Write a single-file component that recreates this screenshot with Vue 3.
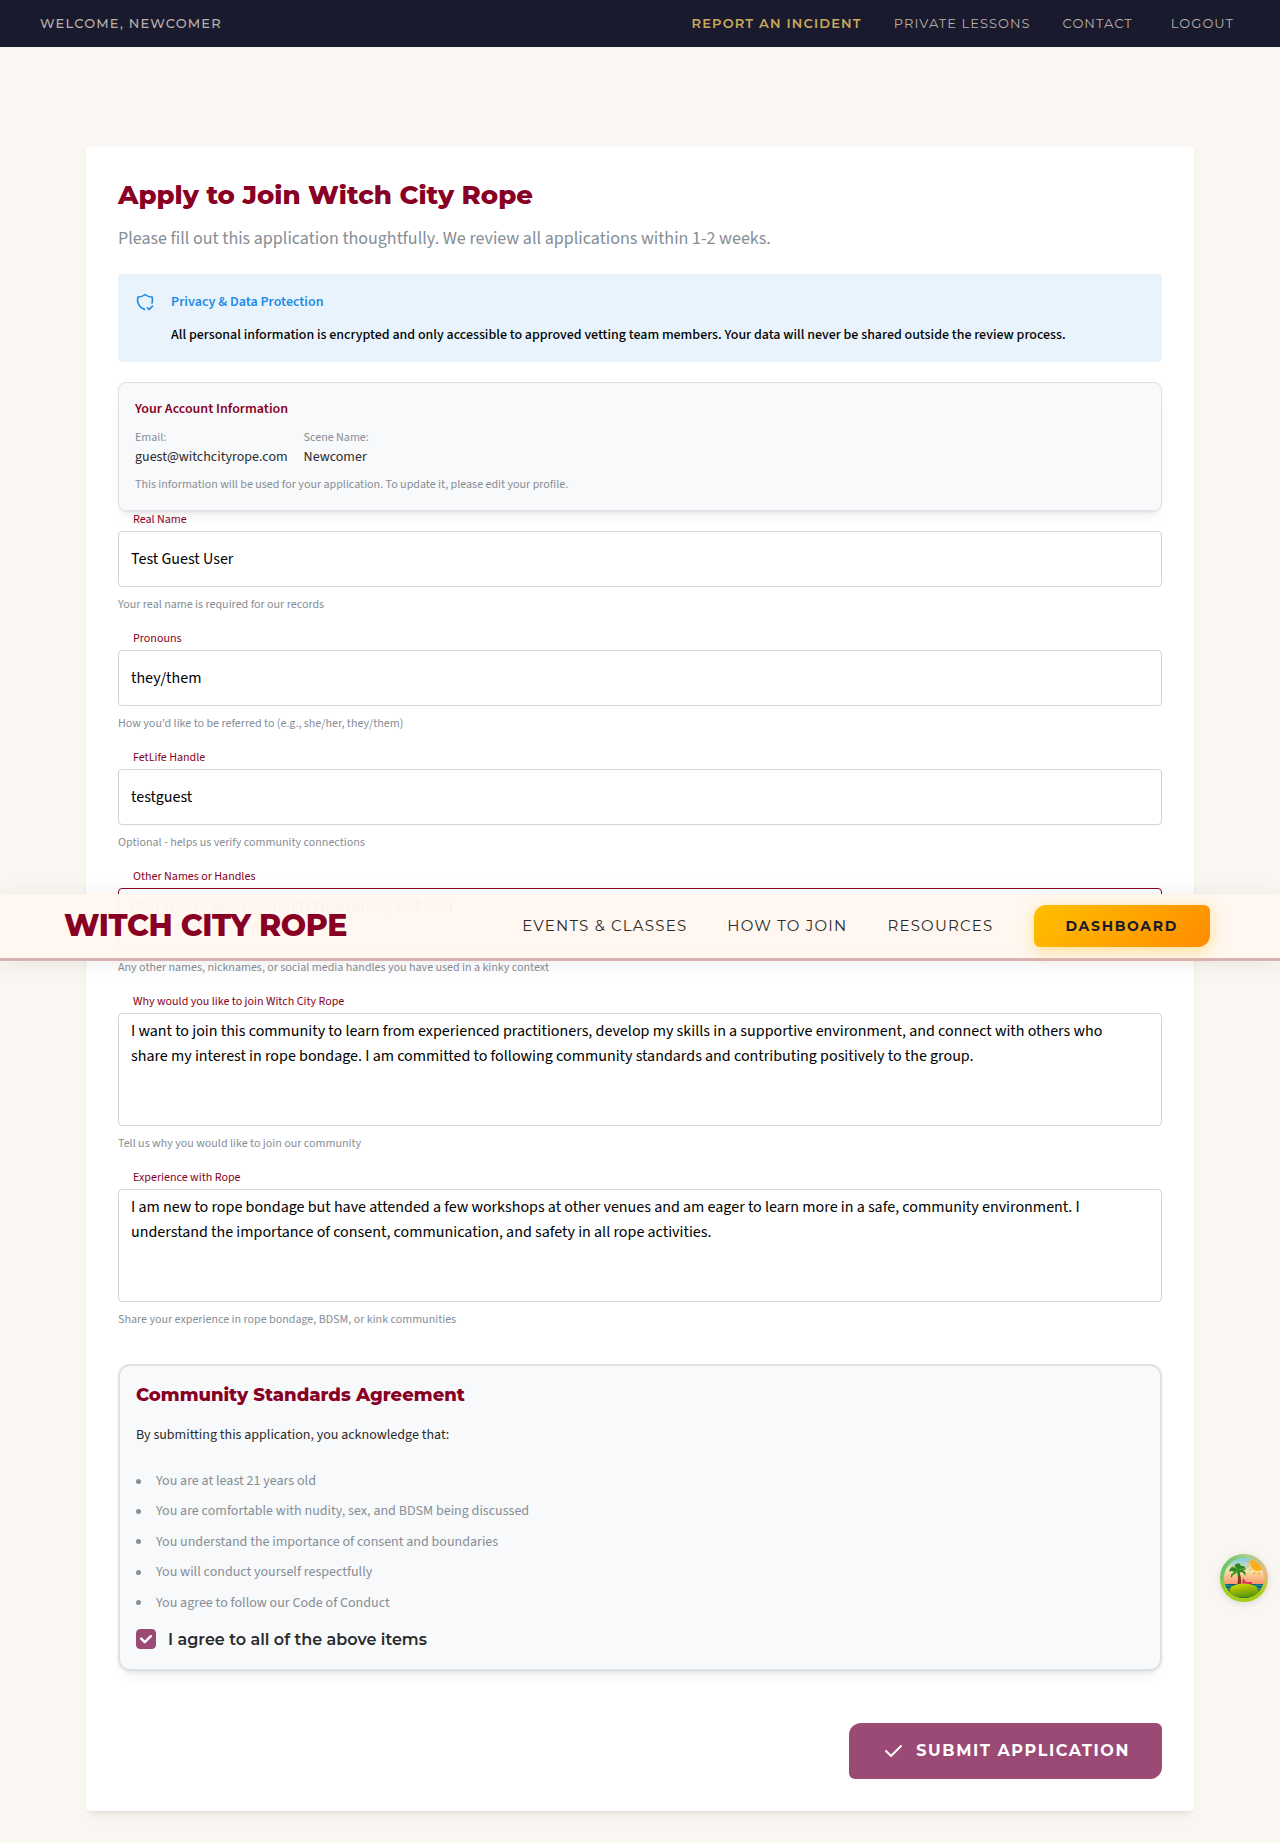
<script setup>
import { ref } from 'vue'

const account = { email: 'guest@witchcityrope.com', sceneName: 'Newcomer' }

const fields = ref([
  { id: 'real-name', label: 'Real Name', value: 'Test Guest User', help: 'Your real name is required for our records', kind: 'text' },
  { id: 'pronouns', label: 'Pronouns', value: 'they/them', help: "How you'd like to be referred to (e.g., she/her, they/them)", kind: 'text' },
  { id: 'fetlife', label: 'FetLife Handle', value: 'testguest', help: 'Optional - helps us verify community connections', kind: 'text' },
  { id: 'other-names', label: 'Other Names or Handles', value: 'Also known as: Community Newcomer, Test User', help: 'Any other names, nicknames, or social media handles you have used in a kinky context', kind: 'short' },
  { id: 'why-join', label: 'Why would you like to join Witch City Rope', value: 'I want to join this community to learn from experienced practitioners, develop my skills in a supportive environment, and connect with others who share my interest in rope bondage. I am committed to following community standards and contributing positively to the group.', help: 'Tell us why you would like to join our community', kind: 'long' },
  { id: 'experience', label: 'Experience with Rope', value: 'I am new to rope bondage but have attended a few workshops at other venues and am eager to learn more in a safe, community environment. I understand the importance of consent, communication, and safety in all rope activities.', help: 'Share your experience in rope bondage, BDSM, or kink communities', kind: 'long' },
])

const standards = [
  'You are at least 21 years old',
  'You are comfortable with nudity, sex, and BDSM being discussed',
  'You understand the importance of consent and boundaries',
  'You will conduct yourself respectfully',
  'You agree to follow our Code of Conduct',
]
const agreed = ref(true)
</script>

<template>
  <div class="page">
    <div class="utility">
      <span class="welcome">Welcome, Newcomer</span>
      <nav class="utility-links" aria-label="Utility">
        <a href="#report" class="report">Report an Incident</a>
        <a href="#lessons">Private Lessons</a>
        <a href="#contact">Contact</a>
        <button type="button">Logout</button>
      </nav>
    </div>

    <header class="site-header">
      <a href="#home" class="logo">WITCH CITY ROPE</a>
      <nav class="main-links" aria-label="Main">
        <a href="#events">Events &amp; Classes</a>
        <a href="#join">How to Join</a>
        <a href="#resources">Resources</a>
        <a href="#dashboard" class="dashboard">Dashboard</a>
      </nav>
    </header>

    <main class="main">
      <form class="sheet" @submit.prevent>
        <h1>Apply to Join Witch City Rope</h1>
        <p class="lead">Please fill out this application thoughtfully. We review all applications within 1-2 weeks.</p>

        <section class="alert">
          <svg class="shield" viewBox="0 0 24 24" aria-hidden="true">
            <path d="M11.46 20.846a12 12 0 0 1 -7.96 -14.846a12 12 0 0 0 8.5 -3a12 12 0 0 0 8.5 3a12 12 0 0 1 -.09 7.06" />
            <path d="M15 19l2 2l4 -4" />
          </svg>
          <div class="alert-body">
            <h2>Privacy &amp; Data Protection</h2>
            <p>All personal information is encrypted and only accessible to approved vetting team members. Your data will never be shared outside the review process.</p>
          </div>
        </section>

        <section class="account">
          <h2>Your Account Information</h2>
          <dl>
            <div>
              <dt>Email:</dt>
              <dd>{{ account.email }}</dd>
            </div>
            <div>
              <dt>Scene Name:</dt>
              <dd>{{ account.sceneName }}</dd>
            </div>
          </dl>
          <p>This information will be used for your application. To update it, please edit your profile.</p>
        </section>

        <div class="fields">
          <div v-for="f in fields" :key="f.id" class="field">
            <label :for="f.id">{{ f.label }}</label>
            <input v-if="f.kind === 'text'" :id="f.id" v-model="f.value" type="text" class="control" :aria-describedby="f.id + '-help'" />
            <textarea v-else :id="f.id" v-model="f.value" class="control" :class="f.kind" :aria-describedby="f.id + '-help'"></textarea>
            <p :id="f.id + '-help'" class="help">{{ f.help }}</p>
          </div>
        </div>

        <section class="agreement">
          <h2>Community Standards Agreement</h2>
          <p>By submitting this application, you acknowledge that:</p>
          <ul>
            <li v-for="s in standards" :key="s">{{ s }}</li>
          </ul>
          <div class="agree">
            <span class="box">
              <input id="agree" v-model="agreed" type="checkbox" />
              <svg v-if="agreed" viewBox="0 0 10 7" aria-hidden="true">
                <path d="M4 4.586L1.707 2.293A1 1 0 1 0 .293 3.707l3 3a.997.997 0 0 0 1.414 0l5-5A1 1 0 1 0 8.293.293L4 4.586z" />
              </svg>
            </span>
            <label for="agree">I agree to all of the above items</label>
          </div>
        </section>

        <div class="actions">
          <button type="submit" class="submit">
            <svg viewBox="0 0 24 24" aria-hidden="true"><path d="M5 12l5 5l10 -10" /></svg>
            Submit Application
          </button>
        </div>
      </form>
    </main>

    <button type="button" class="devtools" aria-label="Open query devtools">
      <svg viewBox="0 0 48 48" aria-hidden="true">
        <defs>
          <linearGradient id="ring" x1="0" y1="0.2" x2="1" y2="0.5">
            <stop offset="0" stop-color="#5cc25e" />
            <stop offset="0.5" stop-color="#a9d08c" />
            <stop offset="1" stop-color="#f2b27a" />
          </linearGradient>
          <linearGradient id="sky" x1="0" y1="0" x2="0" y2="1">
            <stop offset="0.05" stop-color="#6ec8f2" />
            <stop offset="0.35" stop-color="#f4e3a8" />
            <stop offset="0.7" stop-color="#ff8060" />
          </linearGradient>
          <linearGradient id="ringBottom" x1="0" y1="0" x2="0" y2="1">
            <stop offset="0.45" stop-color="#a6cf14" stop-opacity="0" />
            <stop offset="0.8" stop-color="#a6cf14" />
          </linearGradient>
          <linearGradient id="isle" x1="0" y1="0" x2="0.3" y2="1">
            <stop offset="0" stop-color="#e2d900" />
            <stop offset="1" stop-color="#5c9a05" />
          </linearGradient>
          <clipPath id="scene"><circle cx="24" cy="24" r="20" /></clipPath>
        </defs>
        <circle cx="24" cy="24" r="24" fill="url(#ring)" />
        <circle cx="24" cy="24" r="24" fill="url(#ringBottom)" />
        <g clip-path="url(#scene)">
          <path d="M0 0h48v48H0z" fill="url(#sky)" />
          <circle cx="38" cy="9" r="8" fill="#ffae1a" />
          <path d="M29 8h-2M29 12l-2 1M31 15l-2 2M35 18l-1 3M39 18v3" stroke="#ff9c1a" stroke-width="1" />
          <path d="M2 30h44v14H2z" fill="#07606c" />
          <path d="M2 32q4-2 8 0t8 0 8 0 8 0 8 0 8 0M2 35q4-2 8 0t8 0 8 0 8 0 8 0 8 0" fill="none" stroke="#18a9b5" stroke-width="1" />
          <path d="M18 16q4 6 3 16h-4q2-9 0-15z" fill="#7b3c1b" />
          <path d="M22 30l1-6 3 4h6v2z" fill="#e52b63" />
          <ellipse cx="24" cy="36.500" rx="14.500" ry="7" fill="url(#isle)" />
          <path d="M18 16q-7-7-9 2q3-2 5 0q-4 2-3 6q3-4 7-6q-1 3 1 5q1-4 1-5q4 0 5 4q2-4-2-6q2-1 3 0q-1-5-5-4q-1-4-5-2q-3 1 2 6z" fill="#2f8526" />
          <path d="M18 16q-4-5-7-2M18 17q-4 0-6 5M19 16q4-2 6-1" fill="none" stroke="#6cb32a" stroke-width="1" />
        </g>
      </svg>
    </button>
  </div>
</template>

<style>
body {
  margin: 0;
  background: #faf6f2;
}
</style>

<style scoped>
.page {
  position: relative;
  box-sizing: border-box;
  min-height: 100vh;
  padding-bottom: 32px;
  background: #faf6f2;
  color: #000;
  font: 400 14px/22px "Source Sans 3", "Noto Sans CJK SC", sans-serif;
}
h1, h2, p, ul, dl, dd { margin: 0; padding: 0; }
a { text-decoration: none; }
button { font: inherit; border: 0; cursor: pointer; }

.utility {
  box-sizing: border-box;
  display: flex;
  align-items: center;
  justify-content: space-between;
  height: 47px;
  padding: 0 40px 2px;
  background: #1a1a2e;
  color: #b8b0a8;
  font: 500 13px/20px Montserrat, sans-serif;
  letter-spacing: 0.09em;
  text-transform: uppercase;
}
.utility-links {
  display: flex;
  align-items: center;
  gap: 32px;
  font-weight: 400;
  letter-spacing: 0.08em;
}
.utility-links a, .utility-links button { color: #b8b0a8; }
.utility-links .report {
  color: #c9a95c;
  font-weight: 600;
  letter-spacing: 0.09em;
}
.utility-links button {
  padding: 0 6px;
  background: none;
  letter-spacing: inherit;
  text-transform: inherit;
}

.site-header {
  position: absolute;
  top: 894px;
  left: 0;
  right: 0;
  z-index: 10;
  box-sizing: border-box;
  height: 67px;
  display: flex;
  align-items: center;
  justify-content: space-between;
  padding: 0 70px 0 64px;
  border-bottom: 3px solid #dbb2b2;
  background: rgba(255, 247, 240, 0.98);
  box-shadow: 0 2px 20px rgba(0, 0, 0, 0.08);
}
.logo {
  color: #880124;
  font: 800 30px/40px Montserrat, sans-serif;
  letter-spacing: -0.012em;
}
.main-links {
  display: flex;
  align-items: center;
  gap: 40px;
  font: 400 15px/24px Montserrat, sans-serif;
  letter-spacing: 0.08em;
  text-transform: uppercase;
}
.main-links a { color: #2b2b2b; }
.main-links .dashboard {
  padding: 10px 32px;
  border-radius: 12px 6px 12px 6px;
  background: linear-gradient(135deg, #ffbf00, #ff8c00);
  box-shadow: 0 4px 15px rgba(255, 191, 0, 0.4);
  color: #1a1a2e;
  font-size: 14px;
  line-height: 22px;
  font-weight: 700;
  letter-spacing: 0.12em;
}

.main {
  max-width: 1108px;
  margin: 99px auto 0;
}
.sheet {
  padding: 32px;
  border-radius: 4px;
  background: #fff;
  box-shadow: 0 1px 3px rgba(0, 0, 0, 0.05), 0 10px 15px -5px rgba(0, 0, 0, 0.05), 0 7px 7px -5px rgba(0, 0, 0, 0.04);
}
h1 {
  color: #880124;
  font: 800 26px/35px Montserrat, sans-serif;
}
.lead {
  margin-top: 12px;
  color: #868e96;
  font-size: 18px;
  line-height: 28px;
}

.alert {
  display: flex;
  gap: 16px;
  margin-top: 21px;
  padding: 17px 17px 16px;
  border-radius: 4px;
  background: #e8f3fc;
}
.shield {
  flex: none;
  width: 20px;
  height: 20px;
  margin-top: 1px;
  fill: none;
  stroke: #228be6;
  stroke-width: 2;
  stroke-linecap: round;
  stroke-linejoin: round;
}
.alert h2 {
  color: #228be6;
  font: inherit;
  font-weight: 600;
}
.alert p { margin-top: 11px; font-weight: 500; }

.account {
  margin-top: 20px;
  padding: 16px;
  border: 1px solid #dee2e6;
  border-radius: 8px;
  background: #f8f9fb;
  box-shadow: 0 1px 3px rgba(0, 0, 0, 0.05), 0 10px 15px -5px rgba(0, 0, 0, 0.05), 0 7px 7px -5px rgba(0, 0, 0, 0.06);
  line-height: 21px;
}
.account h2 {
  color: #880124;
  font: inherit;
  font-weight: 600;
}
.account dl {
  display: flex;
  gap: 16px;
  margin: 9px 0 8px;
}
.account dt, .account p {
  color: #868e96;
  font-size: 12px;
  line-height: 18px;
}
.account dd { color: #2b2b2b; }

.fields {
  display: flex;
  flex-direction: column;
  gap: 16px;
}
.field {
  display: flex;
  flex-direction: column;
}
.field label {
  margin: 0 0 2px 15px;
  color: #880124;
  font-size: 12px;
  line-height: 18px;
}
.control {
  box-sizing: border-box;
  width: 100%;
  height: 56px;
  padding: 0 12px;
  border: 1px solid #ced4da;
  border-radius: 4px;
  outline: none;
  background: #fff;
  color: #000;
  font: inherit;
  font-size: 16px;
}
textarea.control {
  padding: 5px 24px 4px 12px;
  line-height: 25px;
  resize: none;
}
textarea.short { height: 62px; border-color: #880124; overflow: hidden; }
textarea.long { height: 113px; }
.help {
  margin-top: 8px;
  color: #868e96;
  font-size: 12px;
  line-height: 19px;
}

.agreement {
  margin-top: 35px;
  padding: 16px;
  border: 2px solid #dee2e6;
  border-radius: 12px;
  background: #f8f9fb;
  box-shadow: 0 1px 3px rgba(0, 0, 0, 0.05), 0 10px 15px -5px rgba(0, 0, 0, 0.05), 0 7px 7px -5px rgba(0, 0, 0, 0.04);
}
.agreement h2 {
  color: #880124;
  font: 800 18px/26px Montserrat, sans-serif;
}
.agreement p { margin-top: 16px; color: #2b2b2b; }
.agreement ul {
  display: flex;
  flex-direction: column;
  gap: 8px;
  margin-top: 24px;
  color: #868e96;
  line-height: 1.6;
  list-style: none;
}
.agreement li {
  display: flex;
  align-items: center;
  gap: 15px;
}
.agreement li::before {
  content: "";
  width: 5px;
  height: 5px;
  border-radius: 50%;
  background: currentColor;
}
.agree {
  display: flex;
  align-items: center;
  gap: 12px;
  margin-top: 12px;
  color: #2b2b2b;
  font: 600 16px/27px Montserrat, sans-serif;
}
.box {
  display: grid;
  place-items: center;
}
.box > * { grid-area: 1 / 1; }
.box input {
  appearance: none;
  width: 20px;
  height: 20px;
  margin: 0;
  border: 1px solid #9b4a75;
  border-radius: 4px;
}
.box input:checked { background: #9b4a75; }
.box svg {
  width: 12px;
  fill: #fff;
  pointer-events: none;
}

.actions {
  display: flex;
  justify-content: flex-end;
  margin-top: 52px;
}
.submit {
  display: flex;
  align-items: center;
  gap: 11px;
  height: 56px;
  padding: 0 32px;
  border-radius: 12px 6px 12px 6px;
  background: #9b4a75;
  color: #fff;
  font: 700 16px/24px Montserrat, sans-serif;
  letter-spacing: 0.1em;
  text-transform: uppercase;
}
.submit svg {
  width: 24px;
  height: 24px;
  fill: none;
  stroke: currentColor;
  stroke-width: 2;
  stroke-linecap: round;
  stroke-linejoin: round;
}

.devtools {
  position: absolute;
  top: 1554px;
  right: 12px;
  width: 48px;
  height: 48px;
  padding: 0;
  border-radius: 50%;
  background: none;
  box-shadow: 0 2px 8px rgba(0, 0, 0, 0.12);
}
.devtools svg { display: block; }
</style>
